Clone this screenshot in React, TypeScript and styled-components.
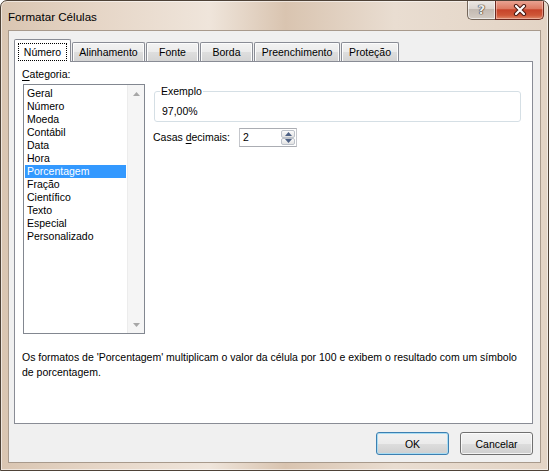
import React from 'react'
import styled, { createGlobalStyle } from 'styled-components'

const GlobalStyle = createGlobalStyle`
  html, body {
    margin: 0;
    padding: 0;
    background: #ffffff;
  }
  body {
    font-family: "Liberation Sans", "Noto Sans", sans-serif;
    font-size: 10.5px;
    color: #000;
  }
  * {
    box-sizing: border-box;
  }
`

const categorias = [
	'Geral', 'Número', 'Moeda', 'Contábil', 'Data', 'Hora', 'Porcentagem',
	'Fração', 'Científico', 'Texto', 'Especial', 'Personalizado',
]

const tabs = [
	{ label: 'Número', width: 57 },
	{ label: 'Alinhamento', width: 73 },
	{ label: 'Fonte', width: 53 },
	{ label: 'Borda', width: 53 },
	{ label: 'Preenchimento', width: 86 },
	{ label: 'Proteção', width: 58 },
]

const Arrow = ({ dir, color }: { dir: 'up' | 'down', color: string }) => (
	<svg width='7' height='4' viewBox='0 0 7 4'>
		{ dir === 'up'
			? <path d='M3.5 0 L7 4 L0 4 Z' fill={ color }/>
			: <path d='M0 0 L7 0 L3.5 4 Z' fill={ color }/> }
	</svg>
)

const App = () => {
	return (
		<>
			<GlobalStyle/>
			<Window>
				<TitleBar>
					<Title>Formatar Células</Title>
					<Caption>
						<HelpButton><HelpGlyph>?</HelpGlyph></HelpButton>
						<CloseButton>
							<svg width='16' height='12' viewBox='0 0 16 12'>
								<path d='M4 2 L12 10 M12 2 L4 10' stroke='#4a1a12' strokeWidth='4.2' strokeLinecap='round'/>
								<path d='M4 2 L12 10 M12 2 L4 10' stroke='#ffffff' strokeWidth='2.2' strokeLinecap='round'/>
							</svg>
						</CloseButton>
					</Caption>
				</TitleBar>

				<Client>
					<TabStrip>
						{ tabs.map((t, i) => (
							<Tab key={ t.label } $active={ i === 0 } $w={ t.width }>
								{ i === 0 ? <Focus>{ t.label }</Focus> : t.label }
							</Tab>
						)) }
					</TabStrip>

					<Panel>
						<TopArea>
							<LeftColumn>
								<FieldLabel><u>C</u>ategoria:</FieldLabel>
								<ListBox>
									<Items>
										{ categorias.map(c => (
											<Item key={ c } $selected={ c === 'Porcentagem' }>{ c }</Item>
										)) }
									</Items>
									<ScrollBar>
										<ScrollArrow><Arrow dir='up' color='#a7a7a7'/></ScrollArrow>
										<ScrollArrow><Arrow dir='down' color='#a7a7a7'/></ScrollArrow>
									</ScrollBar>
								</ListBox>
							</LeftColumn>

							<RightColumn>
								<GroupBox>
									<Legend>Exemplo</Legend>
									<Sample>97,00%</Sample>
								</GroupBox>
								<SpinRow>
									<SpinLabel>Casas <u>d</u>ecimais:</SpinLabel>
									<Spin>
										<SpinValue>2</SpinValue>
										<SpinButtons>
											<SpinButton><Arrow dir='up' color='#4d6185'/></SpinButton>
											<SpinButton><Arrow dir='down' color='#4d6185'/></SpinButton>
										</SpinButtons>
									</Spin>
								</SpinRow>
							</RightColumn>
						</TopArea>

						<Description>
							Os formatos de 'Porcentagem' multiplicam o valor da célula por 100 e exibem o resultado com um símbolo de porcentagem.
						</Description>
					</Panel>

					<Footer>
						<Button $default>OK</Button>
						<Button>Cancelar</Button>
					</Footer>
				</Client>
			</Window>
		</>
	)
}

export default App

const Window = styled.div`
  width: 549px;
  height: 471px;
  display: flex;
  flex-direction: column;
  border: 1px solid #4e4237;
  border-radius: 7px 7px 0 0;
  padding: 0 7px 7px 7px;
  overflow: hidden;
  background: linear-gradient(90deg, #d9c5b1 0%, #e6d6c7 18%, #efe5db 38%, #d9c4b0 52%, #e9ddd1 72%, #e3d4c5 100%);
  box-shadow: inset 0 0 0 1px rgba(255, 255, 255, 0.55);
`

const TitleBar = styled.div`
  height: 29px;
  display: flex;
  align-items: flex-start;
  justify-content: space-between;
`

const Title = styled.span`
  padding-top: 8px;
  font-size: 11.6px;
  line-height: 16px;
  color: #000;
`

const Caption = styled.div`
  display: flex;
  margin-right: -3px;
  margin-top: -1px;
`

const HelpButton = styled.div`
  width: 28px;
  height: 20px;
  display: flex;
  align-items: center;
  justify-content: center;
  border: 1px solid #74665a;
  border-top: none;
  border-right: none;
  border-radius: 0 0 0 5px;
  background: linear-gradient(#eeeae6 0%, #dcd6d0 45%, #c3bab2 50%, #d3cbc3 100%);
  box-shadow: inset 0 0 0 1px rgba(255, 255, 255, 0.6);
`

const HelpGlyph = styled.span`
  font-family: "DejaVu Sans", sans-serif;
  font-weight: bold;
  font-size: 13px;
  line-height: 13px;
  color: #ececec;
  text-shadow: 0 0 1px #3b3129, 0 0 1px #3b3129, 0 0 1px #3b3129;
`

const CloseButton = styled.div`
  width: 49px;
  height: 20px;
  display: flex;
  align-items: center;
  justify-content: center;
  border: 1px solid #6b2a20;
  border-top: none;
  border-radius: 0 0 5px 0;
  background: linear-gradient(#eaa898 0%, #dd7b63 45%, #c7432a 52%, #cf5637 80%, #e08a6b 100%);
  box-shadow: inset 0 0 0 1px rgba(255, 220, 210, 0.45);
`

const Client = styled.div`
  flex: 1;
  display: flex;
  flex-direction: column;
  background: #f0f0f0;
  border: 1px solid #a89a8c;
  padding: 8px 7px 7px 5px;
`

const TabStrip = styled.div`
  height: 22px;
  display: flex;
  align-items: flex-end;
`

const Tab = styled.div<{ $active?: boolean, $w: number }>`
  position: relative;
  z-index: ${ p => p.$active ? 1 : 0 };
  width: ${ p => p.$w }px;
  height: ${ p => p.$active ? 23 : 19 }px;
  margin-left: ${ p => p.$active ? 0 : 1 }px;
  margin-bottom: ${ p => p.$active ? -1 : 0 }px;
  padding-top: ${ p => p.$active ? 1 : 0 }px;
  display: flex;
  align-items: center;
  justify-content: center;
  border: 1px solid #898c95;
  border-bottom: none;
  border-radius: 2px 2px 0 0;
  background: ${ p => p.$active
		? '#ffffff'
		: 'linear-gradient(#f3f3f3 0%, #ebebeb 50%, #dedede 51%, #d4d4d4 100%)' };
  box-shadow: ${ p => p.$active ? 'none' : 'inset 1px 1px 0 #fcfcfc, inset -1px 0 0 #fcfcfc' };
  line-height: 15px;
`

const Focus = styled.span`
  outline: 1px dotted #000;
  padding: 0 5px;
  line-height: 16px;
`

const Panel = styled.div`
  flex: 1;
  display: flex;
  flex-direction: column;
  background: #ffffff;
  border: 1px solid #898c95;
  padding: 5px 11px 0 7px;
`

const TopArea = styled.div`
  display: grid;
  grid-template-columns: 131px 1fr;
`

const LeftColumn = styled.div`
  display: flex;
  flex-direction: column;
`

const FieldLabel = styled.div`
  line-height: 15px;
  margin-bottom: 2px;
  u { text-decoration-thickness: 1px; text-underline-offset: 2px; }
`

const ListBox = styled.div`
  width: 122px;
  height: 250px;
  margin-left: 1px;
  display: flex;
  border: 1px solid #828790;
  background: #ffffff;
`

const Items = styled.ul`
  flex: 1;
  margin: 0;
  padding: 2px 1px 0 1px;
  list-style: none;
`

const Item = styled.li<{ $selected?: boolean }>`
  height: 13px;
  line-height: 13px;
  padding-left: 2px;
  white-space: nowrap;
  background: ${ p => p.$selected ? '#3399ff' : 'transparent' };
  color: ${ p => p.$selected ? '#ffffff' : '#000000' };
`

const ScrollBar = styled.div`
  width: 17px;
  display: flex;
  flex-direction: column;
  justify-content: space-between;
  background: #f5f5f5;
  border-left: 1px solid #ececec;
`

const ScrollArrow = styled.div`
  height: 17px;
  display: flex;
  align-items: center;
  justify-content: center;
`

const RightColumn = styled.div`
  display: flex;
  flex-direction: column;
`

const GroupBox = styled.fieldset`
  margin: 17px 0 0 1px;
  padding: 0 5px 2px 7px;
  border: 1px solid #d5dfe5;
  border-radius: 3px;
  min-width: 0;
`

const Legend = styled.legend`
  padding: 0 1px;
  margin-left: -2px;
  line-height: 15px;
`

const Sample = styled.div`
  margin-top: 5px;
  line-height: 15px;
`

const SpinRow = styled.div`
  margin-top: 6px;
  display: flex;
  align-items: center;
`

const SpinLabel = styled.span`
  width: 86px;
  white-space: nowrap;
  line-height: 15px;
  u { text-decoration-thickness: 1px; text-underline-offset: 2px; }
`

const Spin = styled.div`
  width: 58px;
  height: 19px;
  display: flex;
  border: 1px solid #abadb3;
  border-left-color: #c5c7cc;
  border-right-color: #c5c7cc;
  background: #ffffff;
`

const SpinValue = styled.span`
  flex: 1;
  padding-left: 3px;
  line-height: 17px;
`

const SpinButtons = styled.div`
  width: 15px;
  display: flex;
  flex-direction: column;
  padding: 1px 1px 1px 0;
`

const SpinButton = styled.div`
  flex: 1;
  display: flex;
  align-items: center;
  justify-content: center;
  border: 1px solid #bcc1c9;
  border-radius: 2px;
  background: linear-gradient(#fbfbfb 0%, #eeeeee 50%, #e3e3e3 100%);
`

const Description = styled.p`
  margin: 16px 0 0 0;
  line-height: 15px;
`

const Footer = styled.div`
  margin-top: 8px;
  display: flex;
  justify-content: flex-end;
  gap: 11px;
`

const Button = styled.button<{ $default?: boolean }>`
  width: 73px;
  height: 23px;
  padding: 0;
  font: inherit;
  color: #000;
  border: 1px solid ${ p => p.$default ? '#3c7fb1' : '#707070' };
  border-radius: 3px;
  background: linear-gradient(#f2f2f2 0%, #ebebeb 50%, #dddddd 51%, #cfcfcf 100%);
  box-shadow: inset 0 0 0 1px ${ p => p.$default ? '#a9dcf2' : 'rgba(255, 255, 255, 0.75)' };
`
